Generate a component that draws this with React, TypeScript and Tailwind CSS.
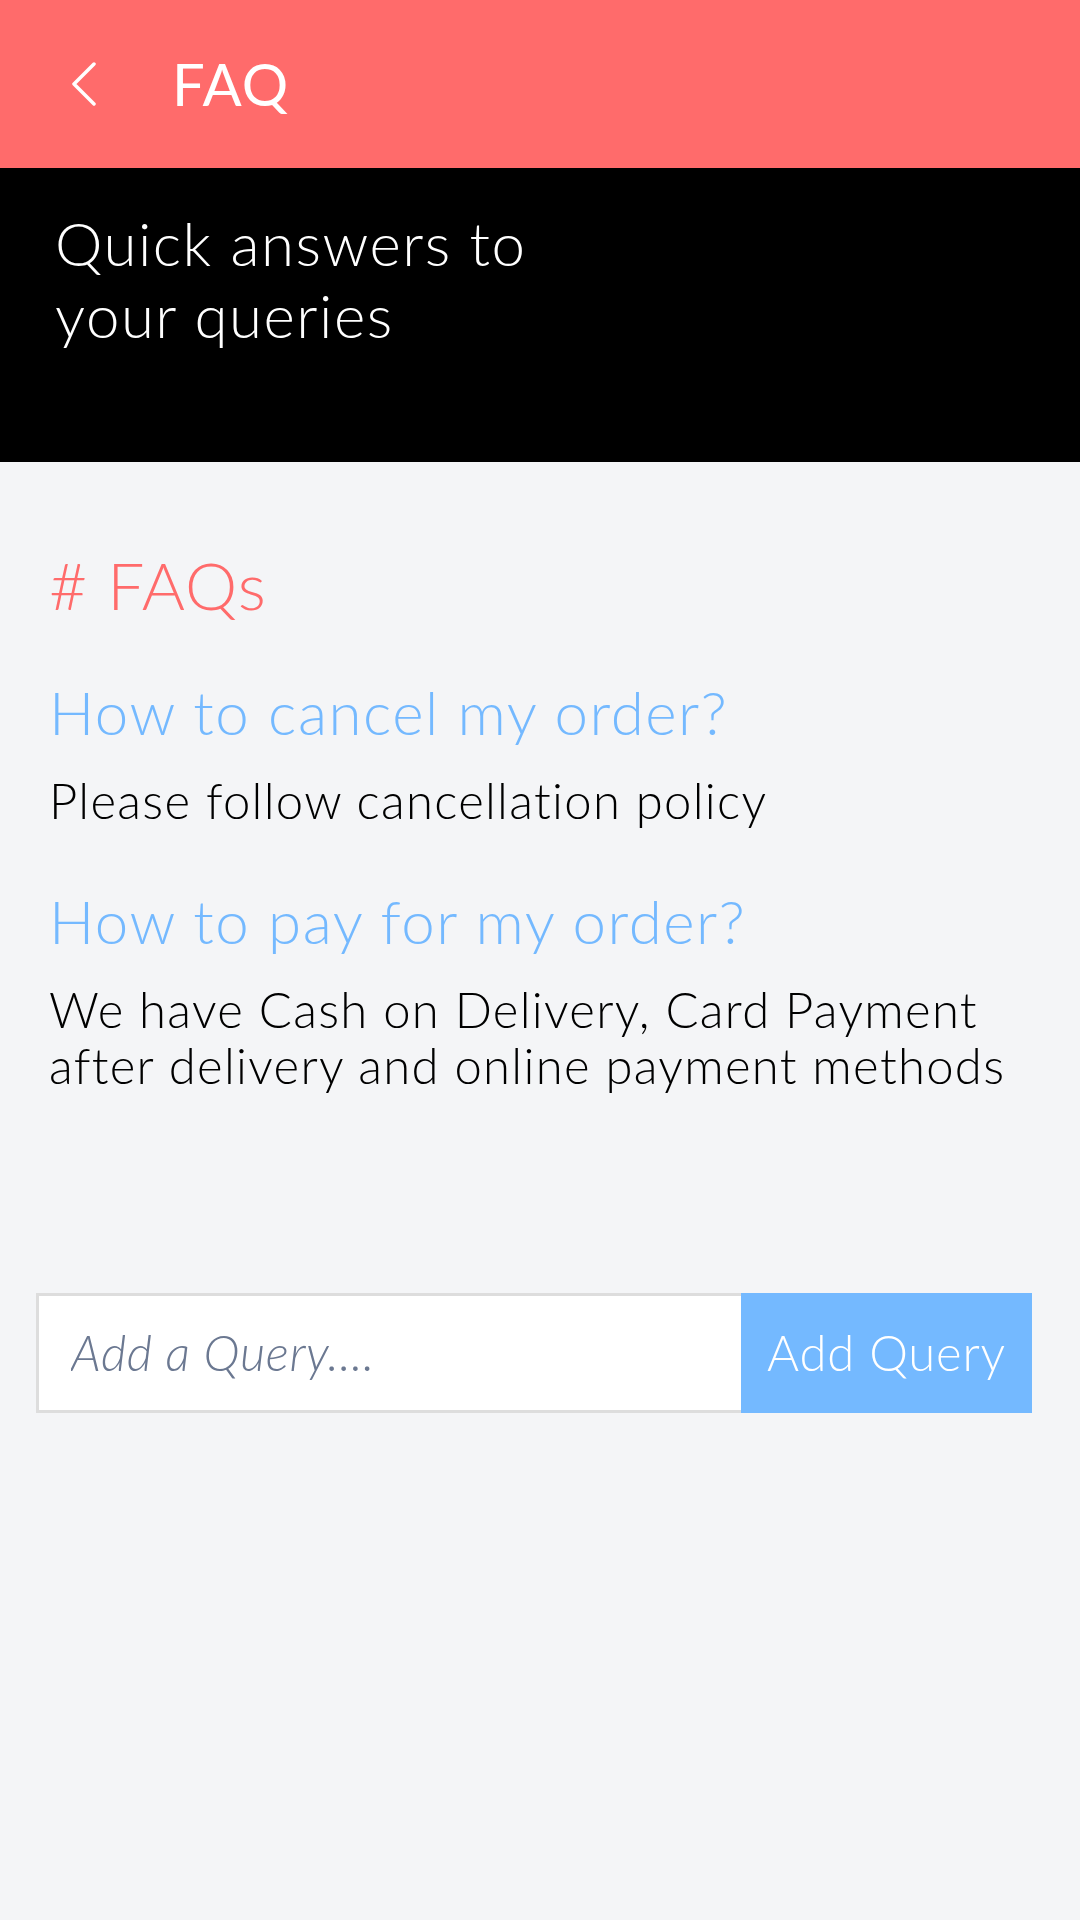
import { useState } from "react";

const faqs = [
  { q: "How to cancel my order?", a: "Please follow cancellation policy" },
  {
    q: "How to pay for my order?",
    a: "We have Cash on Delivery, Card Payment after delivery and online payment methods",
  },
];

export default function App() {
  const [query, setQuery] = useState("");

  return (
    <div className="min-h-screen bg-[#F4F5F7] font-['Lato',sans-serif]">
      {/* Top bar */}
      <header className="h-[168px] bg-[#FF6B6B] flex items-center">
        <button className="ml-[70px] w-[28px] h-[44px] flex items-center justify-center">
          <svg width="26" height="44" viewBox="0 0 26 44" fill="none">
            <path d="M23 2 L3 22 L23 42" stroke="white" strokeWidth="3.5" strokeLinecap="round" strokeLinejoin="round" />
          </svg>
        </button>
        <h1 className="ml-[74px] text-white text-[58px] leading-none tracking-[1px]">FAQ</h1>
      </header>

      {/* Banner */}
      <section className="h-[294px] bg-black pl-[55px] pt-[39px]">
        <p className="text-white text-[60px] leading-[72px] font-light tracking-[1.5px]">
          Quick answers to
          <br />
          your queries
        </p>
      </section>

      {/* FAQ list */}
      <main className="px-[49px]">
        <h2 className="mt-[90px] text-[#FF6B6B] text-[66px] leading-none font-light tracking-[1px]">
          # FAQs
        </h2>
        <div className="mt-[64px] flex flex-col gap-[63px]">
          {faqs.map((f) => (
            <div key={f.q}>
              <h3 className="text-[#74B9FF] text-[60px] leading-none font-light tracking-[1.5px]">{f.q}</h3>
              <p className="mt-[30px] text-black text-[49px] leading-[56px] font-light tracking-[1.3px]">{f.a}</p>
            </div>
          ))}
        </div>
      </main>

      {/* Add query */}
      <form
        className="mt-[200px] ml-[36px] mr-[48px] flex h-[120px]"
        onSubmit={(e) => {
          e.preventDefault();
          setQuery("");
        }}
      >
        <input
          value={query}
          onChange={(e) => setQuery(e.target.value)}
          placeholder="Add a Query...."
          className="flex-1 min-w-0 bg-white border-[3px] border-r-0 border-[#DDDDDD] pl-[32px] text-[49px] font-light italic tracking-[0.6px] text-black placeholder:text-[#6B7891] outline-none"
        />
        <button
          type="submit"
          className="w-[291px] bg-[#74B9FF] text-white text-[49px] font-light tracking-[0.8px]"
        >
          Add Query
        </button>
      </form>
    </div>
  );
}
